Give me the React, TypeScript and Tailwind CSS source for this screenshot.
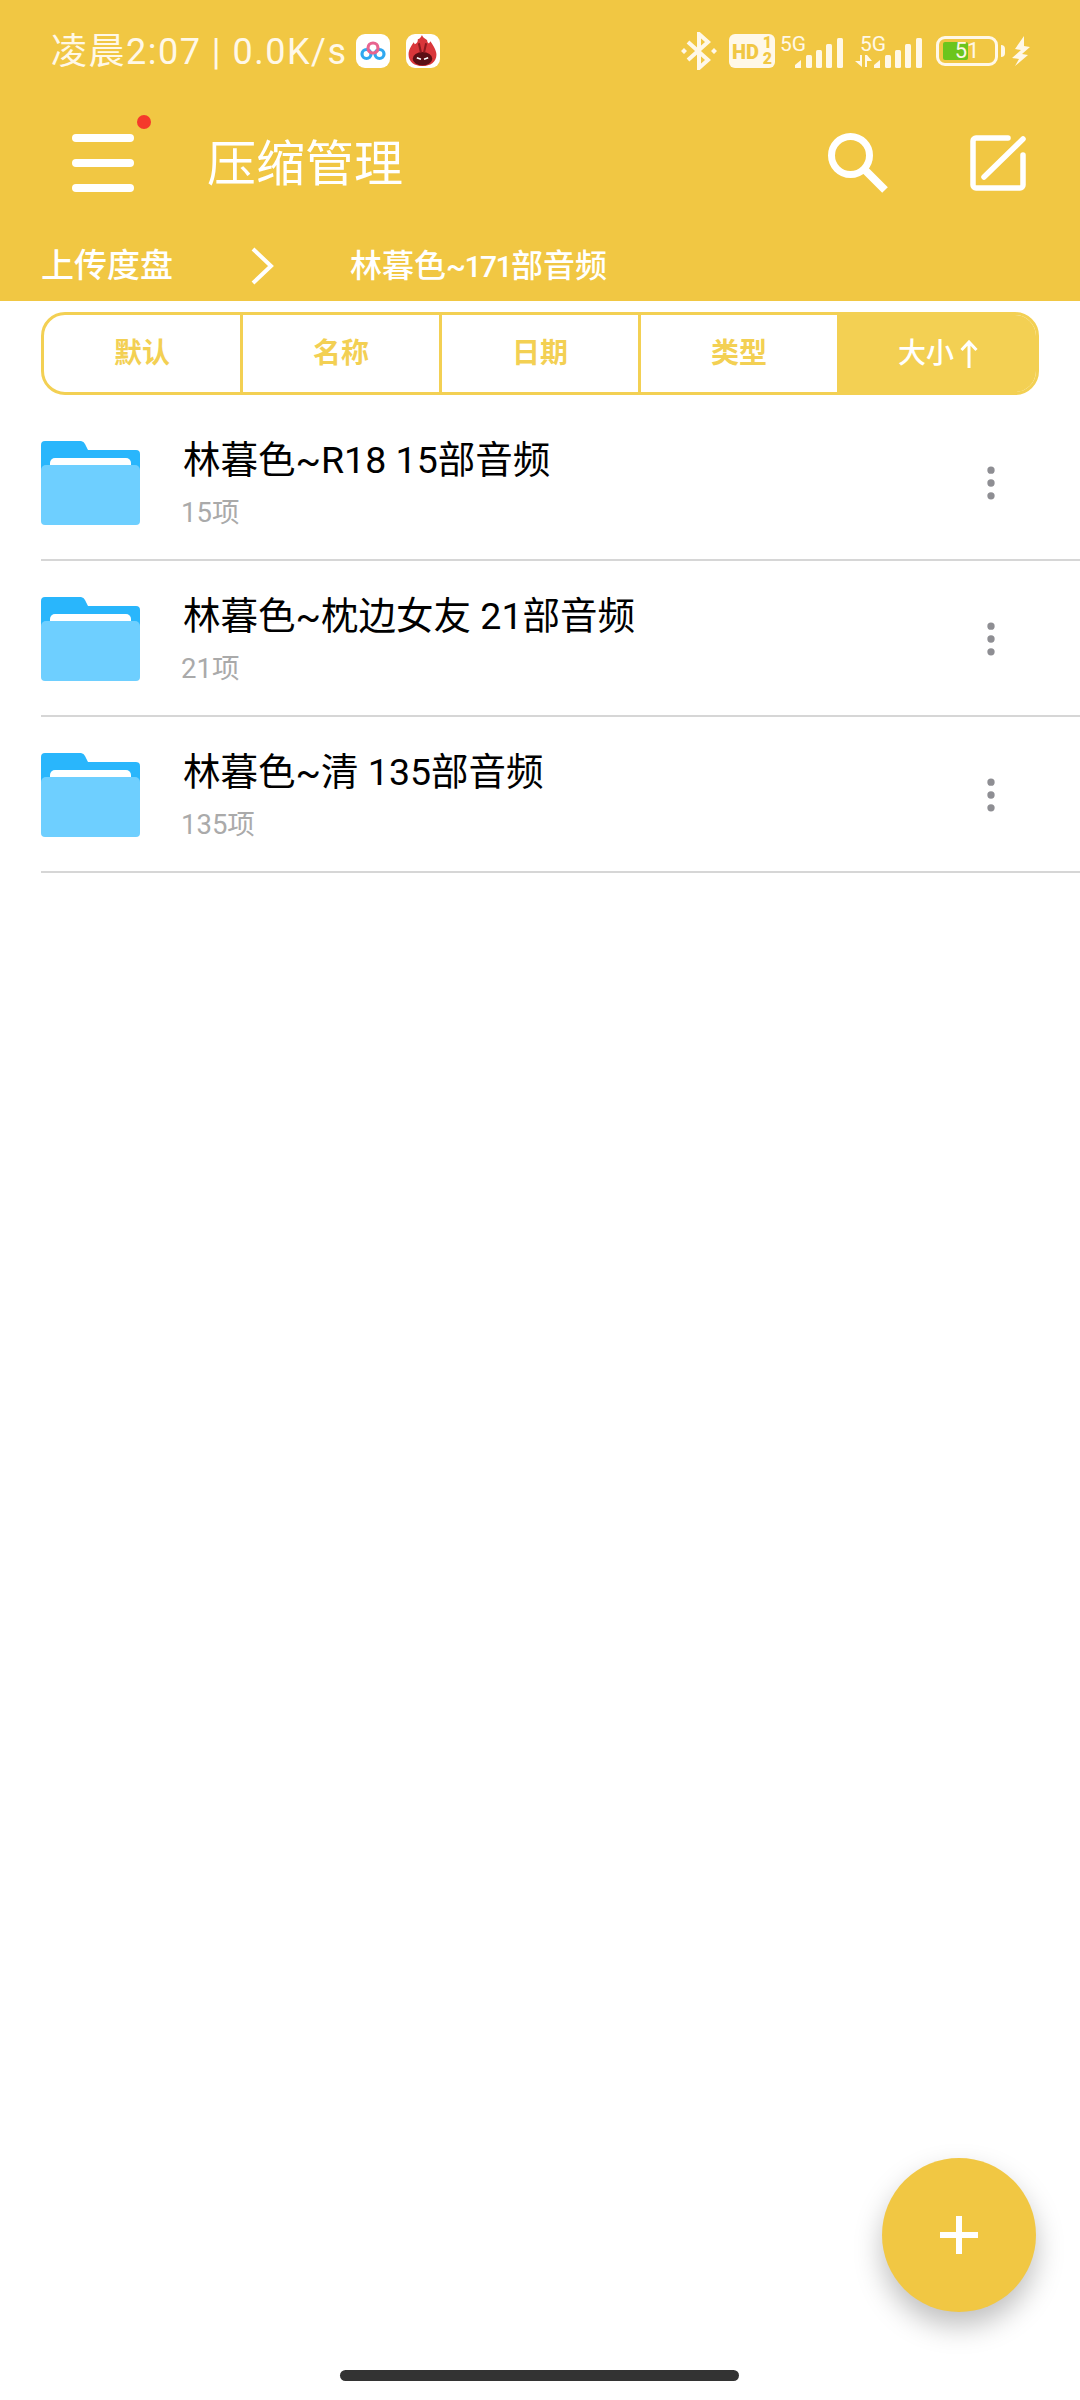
import { MoreVertical } from "lucide-react"

const cjk = "font-['Roboto','Noto_Sans_CJK_SC',sans-serif]"

const tabs = ["默认", "名称", "日期", "类型"]

const folders = [
  { name: "林暮色~R18 15部音频", count: "15项" },
  { name: "林暮色~枕边女友 21部音频", count: "21项" },
  { name: "林暮色~清 135部音频", count: "135项" },
]

function BaiduIcon() {
  return (
    <span className="flex h-[34px] w-[34px] items-center justify-center rounded-[9px] bg-white">
      <svg width="26" height="20" viewBox="0 0 26 20" fill="none" strokeWidth="3.200">
        <circle cx="6.500" cy="13" r="4.500" stroke="#2fa8f0" />
        <circle cx="19.500" cy="13" r="4.500" stroke="#2fa8f0" />
        <circle cx="13" cy="7" r="5" stroke="#e8648f" />
      </svg>
    </span>
  )
}

function AntutuIcon() {
  return (
    <span className="flex h-[34px] w-[34px] items-center justify-center rounded-[9px] bg-white">
      <svg width="29" height="31" viewBox="0 0 27 30">
        <path d="M13 0c1 3 3 3 5 5 0 2 1 3 2 3l1-2c3 4 6 9 6 13 0 7-6 11-13.500 11S0 26 0 19c0-5 3-9 5-12l1 2c2-1 3-2 3-5 2 0 3-2 4-4z" fill="#d9363a" />
        <ellipse cx="13.500" cy="23" rx="9.500" ry="6.500" fill="#5c0f14" />
        <path d="M8 22l4 1.500M19 22l-4 1.500" stroke="#fff" strokeWidth="1.500" />
        <path d="M10 8l2 9M17 8l-2 9" stroke="#8d1a20" strokeWidth="2" />
      </svg>
    </span>
  )
}

function Bars() {
  return (
    <svg width="48" height="30" viewBox="0 0 48 30" fill="#fff8e8">
      <path d="M0 30v-3l6-5v8z" />
      <rect x="11" y="17" width="6" height="13" rx="1.500" />
      <rect x="21" y="12" width="6" height="18" rx="1.500" />
      <rect x="31" y="6" width="6" height="24" rx="1.500" />
      <rect x="42" y="0" width="6" height="30" rx="1.500" />
    </svg>
  )
}

function StatusBar() {
  return (
    <div className="flex h-[100px] items-center justify-between pt-[1px] pl-[51px] pr-[50px] text-[#fff8e8]">
      <div className="flex items-center">
        <span className="pt-[2px] text-[36px] leading-none tracking-[1.500px] whitespace-nowrap">凌晨2:07 | 0.0K/s</span>
        <span className="ml-[8px] flex gap-[16px]">
          <BaiduIcon />
          <AntutuIcon />
        </span>
      </div>
      <div className="flex items-center">
        <svg width="36" height="38" viewBox="0 0 36 38" fill="none" stroke="#fff8e8" strokeWidth="4">
          <path d="M7 10l20 18-9 8V2l9 8L7 28" />
          <path d="M0 19l3-3 3 3-3 3zM30 19l3-3 3 3-3 3z" fill="#fff8e8" stroke="none" />
        </svg>
        <span className="relative ml-[12px] h-[34px] w-[46px] rounded-[6px] bg-[#fff8e8] text-[#f1c743]">
          <span className="absolute left-[3px] top-[8px] text-[20px] leading-none font-black">HD</span>
          <span className="absolute right-[3px] top-[1px] text-[16px] leading-none font-black">1</span>
          <span className="absolute right-[3px] bottom-[1px] text-[16px] leading-none font-black">2</span>
        </span>
        <span className="relative ml-[5px] flex h-[34px] w-[63px] items-end justify-end">
          <span className="absolute top-0 left-0 text-[21px] leading-none">5G</span>
          <Bars />
        </span>
        <span className="relative ml-[12px] flex h-[34px] w-[67px] items-end justify-between">
          <span className="absolute top-0 left-[5px] text-[21px] leading-none">5G</span>
          <svg className="mb-[1px]" width="17" height="12" viewBox="0 0 17 12" fill="#fff8e8">
            <path d="M0 6l5 0V0h2v12zM10 0h2l5 6h-5v6h-2z" />
          </svg>
          <Bars />
        </span>
        <span className="relative ml-[14px] flex h-[30px] w-[62px] items-center justify-center rounded-[9px] border-[3px] border-[#fff8e8]">
          <span className="absolute left-[4px] top-[3px] h-[18px] w-[25px] rounded-[2px] bg-[#6cc51d]" />
          <span className="relative text-[22px] leading-none">51</span>
          <span className="absolute -right-[10px] top-[6px] h-[12px] w-[4px] rounded-r bg-[#fff8e8]" />
        </span>
        <svg className="ml-[14px]" width="18" height="30" viewBox="0 0 18 30" fill="#fff8e8">
          <path d="M12 0L3 13l6 1-9 8 7 1-4 7 13-11-6-1 8-7-6-1z" />
        </svg>
      </div>
    </div>
  )
}

function Header() {
  return (
    <header className="h-[301px] bg-[#f1c743] text-white">
      <StatusBar />
      <div className="flex h-[126px] items-center pl-[72px] pr-[54px]">
        <button className="relative flex h-[58px] w-[62px] flex-col justify-between">
          <span className="h-[8px] rounded-full bg-white" />
          <span className="h-[8px] rounded-full bg-white" />
          <span className="h-[8px] rounded-full bg-white" />
          <span className="absolute -right-[17px] -top-[19px] h-[14px] w-[14px] rounded-full bg-[#f5392b]" />
        </button>
        <h1 className="ml-[73px] flex-1 pt-[2px] text-[49px] leading-none font-normal">压缩管理</h1>
        <svg className="mr-[82px]" width="60" height="60" viewBox="0 0 60 60" fill="none" stroke="#fff" strokeWidth="7">
          <circle cx="22.500" cy="22.500" r="19" />
          <path d="M36 36l21 21" strokeWidth="8" />
        </svg>
        <svg width="56" height="56" viewBox="0 0 56 56" fill="none" stroke="#fff" strokeWidth="5.500" strokeLinecap="round" strokeLinejoin="round">
          <path d="M38 3H6a3 3 0 0 0-3 3v44a3 3 0 0 0 3 3h44a3 3 0 0 0 3-3V20" />
          <path d="M14 42L53 4" />
        </svg>
      </div>
      <div className="flex h-[75px] items-center pt-[4px] pl-[41px] text-[33px] leading-none font-medium">
        <span>上传度盘</span>
        <svg className="ml-[77px]" width="24" height="38" viewBox="0 0 24 38" fill="none" stroke="#fff" strokeWidth="4">
          <path d="M3 2l18 17L3 36" />
        </svg>
        <span className="ml-[76px] text-[32px] whitespace-nowrap">
          林暮色<span className="text-[30px] tracking-[-1.500px]">~171</span>部音频
        </span>
      </div>
    </header>
  )
}

function SortTabs() {
  return (
    <div className="mx-[41px] mt-[11px] flex h-[83px] overflow-hidden rounded-[24px] border-[3px] border-[#f3d053] text-[28px] leading-none font-bold text-[#f3d053]">
      {tabs.map((t) => (
        <div key={t} className="flex flex-1 items-center justify-center border-r-[3px] border-[#f3d053]">{t}</div>
      ))}
      <div className="flex flex-1 items-center justify-center gap-[6px] bg-[#f3d053] font-medium text-white">
        大小
        <svg width="18" height="28" viewBox="0 0 18 28" fill="none" stroke="#fff" strokeWidth="3">
          <path d="M9 28V2M1.500 10L9 2l7.500 8" />
        </svg>
      </div>
    </div>
  )
}

function FolderIcon() {
  return (
    <svg width="99" height="84" viewBox="0 0 99 84">
      <path d="M0 4a4 4 0 0 1 4-4h36a5 5 0 0 1 4 3l3 6h48a4 4 0 0 1 4 4v20H0z" fill="#29b6fc" />
      <path d="M9 22a5 5 0 0 1 5-5h71a5 5 0 0 1 5 5v6H9z" fill="#fff" />
      <path d="M0 29a5 5 0 0 1 5-5h89a5 5 0 0 1 5 5v51a4 4 0 0 1-4 4H4a4 4 0 0 1-4-4z" fill="#6ecfff" />
    </svg>
  )
}

function FolderRow({ name, count }: { name: string; count: string }) {
  return (
    <div className="ml-[41px] flex h-[156px] items-center border-b-2 border-[#d6d6d6] pt-[2px]">
      <FolderIcon />
      <div className="ml-[43px] flex-1">
        <div className="text-[37.500px] leading-[50px] text-black">{name}</div>
        <div className="mt-[10px] -ml-[2px] text-[27.500px] leading-[36px] text-[#aaaaaa]">{count}</div>
      </div>
      <MoreVertical className="mr-[67px] fill-current text-[#8e8e93]" size={44} />
    </div>
  )
}

export default function App() {
  return (
    <div className={`relative h-[2400px] w-[1080px] overflow-hidden bg-white ${cjk}`}>
      <Header />
      <SortTabs />
      <div className="mt-[10px]">
        {folders.map((f) => (
          <FolderRow key={f.name} {...f} />
        ))}
      </div>
      <button className="absolute left-[882px] top-[2158px] flex h-[154px] w-[154px] items-center justify-center rounded-full bg-[#f1c743] shadow-[0_14px_28px_rgba(0,0,0,0.25)]">
        <svg width="38" height="38" viewBox="0 0 38 38" fill="#fff">
          <path d="M16 0h6v16h16v6H22v16h-6V22H0v-6h16z" />
        </svg>
      </button>
      <div className="absolute bottom-[19px] left-[340px] h-[11px] w-[399px] rounded-full bg-[#333333]" />
    </div>
  )
}
